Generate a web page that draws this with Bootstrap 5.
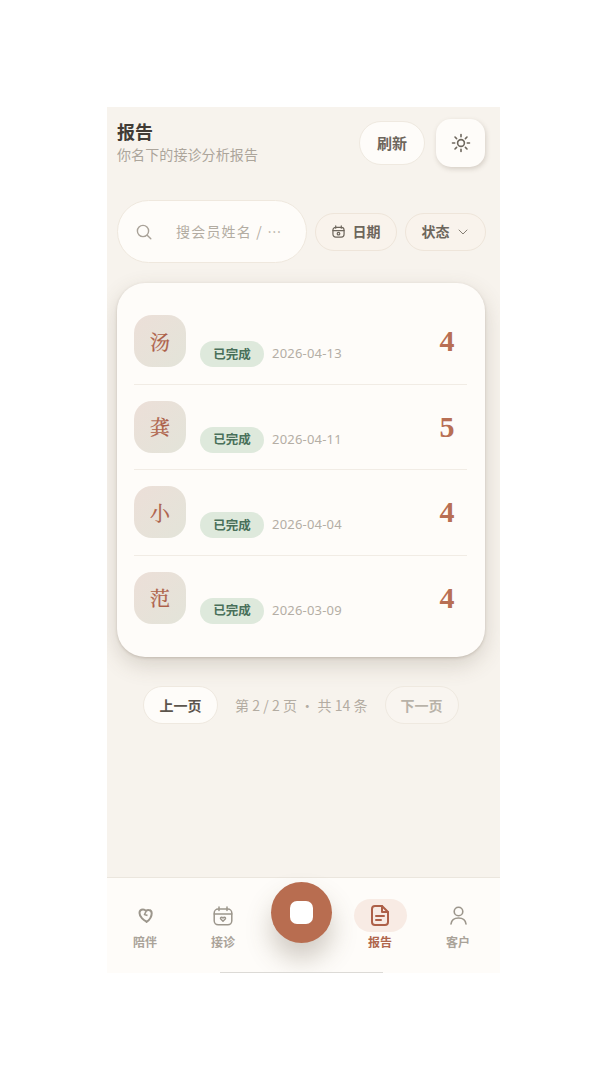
<!DOCTYPE html>
<html lang="zh-CN">
<head>
<meta charset="UTF-8" />
<meta name="viewport" content="width=device-width, initial-scale=1.0" />
<title>报告</title>
<link href="https://cdn.jsdelivr.net/npm/bootstrap@5.3.0/dist/css/bootstrap.min.css" rel="stylesheet">
<style>
  body { background: #fff; font-family: "Noto Sans CJK SC", "Noto Sans", sans-serif; }
  .stage { padding: 107px 107px 0; }
  .phone { width: 393px; height: 866px; background: #f7f3ed; overflow: hidden; }
  .main-area { height: 770px; padding: 12px 15px 0 10px; }
  .page-title { font-size: 18px; line-height: 24px; font-weight: 700; color: #413b35; }
  .page-sub { font-size: 14px; line-height: 20px; margin-top: 1px; color: #aca59b; letter-spacing: .1px; }
  .btn-refresh { width: 66px; height: 44px; margin-top: 2px; border-radius: 22px; border: 1px solid #efe9e0; background: #fefcf9; color: #6d665c; font-size: 15px; font-weight: 700; }
  .btn-theme { width: 49px; height: 48px; margin-left: 11px; border-radius: 15px; background: #fefcf9; box-shadow: 1px 2px 5px rgba(90, 75, 55, .22); }
  .filter-row { margin-top: 33px; margin-right: -1px; }
  .search-box { width: 190px; height: 63px; border-radius: 32px; border: 1px solid #efe8de; background: #fefcf9; padding-left: 18px; color: #b3aca2; font-size: 14px; }
  .search-text { margin-left: 24px; letter-spacing: 1.2px; white-space: nowrap; }
  .filter-pill { height: 38px; border-radius: 19px; border: 1px solid #eee5da; background: #f9f3ec; color: #6d665c; font-size: 14px; font-weight: 700; }
  .pill-date { width: 82px; margin-left: 8px; }
  .pill-state { width: 81px; margin-left: 8px; padding-right: 2px; }
  .report-card { margin-top: 20px; height: 374px; border-radius: 28px; background: #fefcf9; padding: 16px 18px 0 17px; box-shadow: 0 8px 22px rgba(90, 75, 55, .2), 0 1px 3px rgba(90, 75, 55, .22); }
  .report-row { height: 85.5px; border-bottom: 1px solid #f1ece5; padding-top: 16px; }
  .report-row:last-child { border-bottom: 0; }
  .avatar-tile { width: 52px; height: 52px; padding-top: 1px; border-radius: 18px; background: linear-gradient(135deg, #ecdfd8, #e3e4d9); color: #ad6048; font-family: "Noto Serif CJK SC", "Liberation Serif", "Noto Sans CJK SC", serif; font-size: 20px; -webkit-text-stroke: .25px #ad6048; }
  .row-info { padding-top: 26px; }
  .state-tag { width: 64px; height: 26px; margin-left: 14px; border-radius: 13px; background: #dee9dc; color: #49705a; font-size: 12.5px; font-weight: 700; }
  .date-text { margin-left: 8px; font-size: 13px; color: #b4aea5; letter-spacing: .2px; font-family: "Noto Sans", sans-serif; }
  .score-num { width: 40px; font-family: "Liberation Serif", serif; font-weight: 700; font-size: 30px; line-height: 52px; color: #b86f54; text-align: center; }
  .pager { margin-top: 29px; padding-left: 26px; font-size: 14px; }
  .pager-btn { width: 75px; height: 38px; border-radius: 19px; border: 1px solid #efe9e0; background: #fefcf9; color: #5c554c; font-weight: 700; }
  .pager-btn.is-off { width: 74px; background: #f9f5f0; color: #b8b2a8; margin-left: 17px; }
  .pager-text { margin-left: 17px; color: #b3aca2; letter-spacing: .05px; white-space: nowrap; font-family: "Noto Sans CJK SC", sans-serif; }
  .tabbar { position: relative; height: 96px; background: #fefcf9; border-top: 1px solid #ebe6de; }
  .tab-item { position: absolute; top: 21px; width: 78px; text-align: center; color: #aaa399; font-size: 12px; font-weight: 700; line-height: 18px; }
  .tab-icon { height: 33px; display: flex; align-items: center; justify-content: center; margin-bottom: 1px; }
  .tab-item.is-on { color: #b0664c; }
  .tab-item.is-on .tab-icon { width: 53px; margin: 0 auto 1px; border-radius: 17px; background: #f8ebe4; }
  .fab { position: absolute; left: 164px; top: 4px; width: 61px; height: 61px; border-radius: 50%; background: #b86d50; box-shadow: 0 16px 26px rgba(90, 75, 55, .28); }
  .fab span { width: 23px; height: 23px; border-radius: 7px; background: #fff; }
  .home-bar { position: absolute; left: 113px; bottom: 0; width: 163px; height: 1px; background: #dcdad6; }
</style>
</head>
<body>
<div class="stage">
  <div class="phone">
    <div class="main-area">
      <div class="d-flex align-items-start">
        <div class="flex-grow-1">
          <div class="page-title">报告</div>
          <div class="page-sub">你名下的接诊分析报告</div>
        </div>
        <button class="btn-refresh d-flex align-items-center justify-content-center">刷新</button>
        <div class="btn-theme d-flex align-items-center justify-content-center">
          <svg width="20" height="20" viewBox="0 0 20 20" fill="none" stroke="#6d665c" stroke-width="1.6" stroke-linecap="round"><circle cx="10" cy="10" r="3.4"/><path d="M10 1.500v2.200M10 16.300v2.200M1.500 10h2.200M16.300 10h2.200M4 4l1.600 1.600M14.400 14.400 16 16M4 16l1.600-1.600M14.400 5.600 16 4"/></svg>
        </div>
      </div>

      <div class="filter-row d-flex align-items-center">
        <div class="search-box d-flex align-items-center">
          <svg width="16" height="16" viewBox="0 0 16 16" fill="none" stroke="#a9a298" stroke-width="1.4" stroke-linecap="round" class="flex-shrink-0"><circle cx="7" cy="7" r="5.600"/><path d="m11.200 11.200 3.600 3.600"/></svg>
          <span class="search-text">搜会员姓名 / ⋯</span>
        </div>
        <div class="filter-pill pill-date d-flex align-items-center justify-content-center gap-2">
          <svg width="13" height="13" viewBox="0 0 14 14" fill="none" stroke="#6d665c" stroke-width="1.3" stroke-linecap="round"><rect x="1" y="2.500" width="12" height="10.500" rx="3"/><path d="M4 1v2.500M10 1v2.500M1 6h12"/><circle cx="7" cy="9.300" r="1.400"/></svg>
          <span>日期</span>
        </div>
        <div class="filter-pill pill-state d-flex align-items-center justify-content-center gap-2">
          <span>状态</span>
          <svg width="10" height="6" viewBox="0 0 10 6" fill="none" stroke="#857e74" stroke-width="1" stroke-linecap="round" stroke-linejoin="round"><path d="m1 1 4 4 4-4"/></svg>
        </div>
      </div>

      <div class="report-card">
        <div class="report-row d-flex align-items-start">
          <div class="avatar-tile d-flex align-items-center justify-content-center">汤</div>
          <div class="row-info flex-grow-1 d-flex align-items-center">
            <span class="state-tag d-flex align-items-center justify-content-center">已完成</span>
            <span class="date-text">2026-04-13</span>
          </div>
          <div class="score-num">4</div>
        </div>
        <div class="report-row d-flex align-items-start">
          <div class="avatar-tile d-flex align-items-center justify-content-center">龚</div>
          <div class="row-info flex-grow-1 d-flex align-items-center">
            <span class="state-tag d-flex align-items-center justify-content-center">已完成</span>
            <span class="date-text">2026-04-11</span>
          </div>
          <div class="score-num">5</div>
        </div>
        <div class="report-row d-flex align-items-start">
          <div class="avatar-tile d-flex align-items-center justify-content-center">小</div>
          <div class="row-info flex-grow-1 d-flex align-items-center">
            <span class="state-tag d-flex align-items-center justify-content-center">已完成</span>
            <span class="date-text">2026-04-04</span>
          </div>
          <div class="score-num">4</div>
        </div>
        <div class="report-row d-flex align-items-start">
          <div class="avatar-tile d-flex align-items-center justify-content-center">范</div>
          <div class="row-info flex-grow-1 d-flex align-items-center">
            <span class="state-tag d-flex align-items-center justify-content-center">已完成</span>
            <span class="date-text">2026-03-09</span>
          </div>
          <div class="score-num">4</div>
        </div>
      </div>

      <div class="pager d-flex align-items-center">
        <div class="pager-btn d-flex align-items-center justify-content-center">上一页</div>
        <span class="pager-text">第 2 / 2 页 · 共 14 条</span>
        <div class="pager-btn is-off d-flex align-items-center justify-content-center">下一页</div>
      </div>
    </div>

    <div class="tabbar">
      <div class="tab-item" style="left: -1px">
        <div class="tab-icon"><svg width="15" height="15" viewBox="0 0 15 15" fill="none" stroke="#9c968c" stroke-width="2" stroke-linejoin="round"><path d="M8.500 13.500C6 12.500 1.500 9 1.500 5 1.500 3 3 1.500 5 1.500c1.300 0 2.300.6 3 1.500.7-.7 1.600-1.100 2.700-1 1.800.1 3 1.500 3 3.300 0 3.700-2.600 6.900-5.200 8.700z"/><path d="M8 3.500 6.500 6.500l3 1" stroke-width="1.600"/></svg></div>
        <div>陪伴</div>
      </div>
      <div class="tab-item" style="left: 77px">
        <div class="tab-icon"><svg width="20" height="20" viewBox="0 0 20 20" fill="none" stroke="#9c968c" stroke-width="1.500" stroke-linecap="round" stroke-linejoin="round"><rect x="1.200" y="3" width="17.600" height="15.800" rx="4"/><path d="M6 1v3.500M14 1v3.500M1.200 8h17.600"/><path d="M10 15.200 7.800 13c-1-1.200.8-2.400 2.200-1 1.400-1.400 3.200-.2 2.200 1z"/></svg></div>
        <div>接诊</div>
      </div>
      <div class="fab d-flex align-items-center justify-content-center"><span></span></div>
      <div class="tab-item is-on" style="left: 234px">
        <div class="tab-icon"><svg width="18" height="21" viewBox="0 0 18 21" fill="none" stroke="#ad6048" stroke-width="2" stroke-linecap="round" stroke-linejoin="round"><path d="M11 1H4a3 3 0 0 0-3 3v13a3 3 0 0 0 3 3h10a3 3 0 0 0 3-3V7z"/><path d="M11 1v6h6M5 11h8M5 15h5"/></svg></div>
        <div>报告</div>
      </div>
      <div class="tab-item" style="left: 312px">
        <div class="tab-icon"><svg width="17" height="19" viewBox="0 0 17 19" fill="none" stroke="#9c968c" stroke-width="1.600" stroke-linecap="round"><circle cx="8.500" cy="5.500" r="4.300"/><path d="M1 18c.5-4 3.500-6 7.500-6s7 2 7.500 6"/></svg></div>
        <div>客户</div>
      </div>
      <div class="home-bar"></div>
    </div>
  </div>
</div>
<script src="https://cdn.jsdelivr.net/npm/bootstrap@5.3.0/dist/js/bootstrap.bundle.min.js"></script>
</body>
</html>
